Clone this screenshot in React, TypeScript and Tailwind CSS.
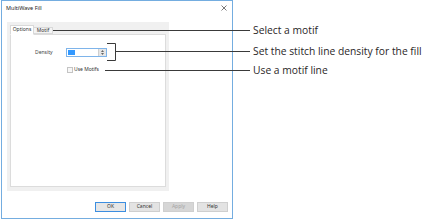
import React from "react";

function Btn({ label, kind }: { label: string; kind?: "default" | "disabled" }) {
  if (kind === "default") {
    return (
      <div className="w-[31px] h-[10px] flex items-center justify-center border border-[#3c8ee0] bg-[#e6e6e6] text-[5px] text-[#333]">
        {label}
      </div>
    );
  }
  if (kind === "disabled") {
    return (
      <div className="w-[31px] h-[10px] flex items-center justify-center border border-[#cfcfcf] bg-[#d6d6d6] text-[5px] text-[#a3a3a3]">
        {label}
      </div>
    );
  }
  return (
    <div className="w-[31px] h-[10px] flex items-center justify-center border border-[#cfcfcf] bg-[#e3e3e3] text-[5px] text-[#333]">
      {label}
    </div>
  );
}

export default function App() {
  return (
    <div className="relative w-[444px] h-[222px] bg-white overflow-hidden" style={{ fontFamily: '"Noto Sans", "Open Sans", sans-serif' }}>
      <div className="flex flex-row">
        {/* Dialog */}
        <div className="ml-px w-[232px] h-[219px] border border-[#74ade0] bg-white flex flex-col">
          <div className="h-[14px] flex items-center justify-between pl-[4px] pr-[5px]">
            <span className="text-[5.5px] text-[#222]">MultiWave Fill</span>
            <svg width="6" height="6" viewBox="0 0 6 6">
              <path d="M0.5 0.5 L5.5 5.5 M5.5 0.5 L0.5 5.5" stroke="#555" strokeWidth="0.8" />
            </svg>
          </div>
          <div className="mt-[7px] ml-[5px] w-[162px] h-[169px] bg-[#f0f0f0] flex flex-col pt-[3px] px-[3px] pb-[4px]">
            <div className="flex flex-row items-end h-[9px]">
              <div className="w-[24px] h-[10px] -mb-px z-10 bg-white border border-[#d9d9d9] border-b-white flex items-center justify-center text-[5px] text-[#333]">
                Options
              </div>
              <div className="w-[19px] h-[7px] bg-[#f4f4f4] border border-l-0 border-[#d9d9d9] flex items-center justify-center text-[5px] text-[#333]">
                Motif
              </div>
            </div>
            <div className="flex-1 bg-white border border-[#dcdcdc] flex flex-col">
              <div className="mt-[13px] flex flex-row items-center pl-[24px]">
                <span className="w-[31px] text-[5px] text-[#444]">Density</span>
                <div className="w-[41px] h-[9px] border border-[#7eb4ea] flex flex-row items-center bg-white">
                  <div className="ml-px w-[7px] h-[5px] bg-[#3399ff]" />
                  <div className="flex-1" />
                  <div className="w-[8px] h-full bg-[#e6e6e6] border-l border-[#cfcfcf] flex flex-col items-center justify-center gap-[1px]">
                    <svg width="3" height="2" viewBox="0 0 3 2"><path d="M0 2 L1.5 0 L3 2 Z" fill="#666" /></svg>
                    <svg width="3" height="2" viewBox="0 0 3 2"><path d="M0 0 L1.5 2 L3 0 Z" fill="#666" /></svg>
                  </div>
                </div>
              </div>
              <div className="mt-[9px] flex flex-row items-center pl-[56px] gap-[1px]">
                <div className="w-[6px] h-[6px] border border-[#c4c4c4] bg-[#f7f7f7]" />
                <span className="text-[5px] text-[#333]">Use Motifs</span>
              </div>
            </div>
          </div>
          <div className="mt-[11px] flex flex-row justify-end gap-[3px] pr-[4px]">
            <Btn label="OK" kind="default" />
            <Btn label="Cancel" />
            <Btn label="Apply" kind="disabled" />
            <Btn label="Help" />
          </div>
        </div>
        {/* Callout labels */}
        <div className="ml-[20px] pt-[24px] flex flex-col text-[10.3px] leading-[12px] text-[#2a2627]" style={{ fontFamily: '"Open Sans", sans-serif' }}>
          <span>Select a motif</span>
          <span className="mt-[9px]">Set the stitch line density for the fill</span>
          <span className="mt-[7px]">Use a motif line</span>
        </div>
      </div>
      {/* Callout lines overlay */}
      <svg className="absolute left-0 top-0 pointer-events-none" width="444" height="222" viewBox="0 0 444 222">
        <g stroke="#3a3a3a" strokeWidth="1" fill="none">
          <path d="M53 30.5 H250" />
          <path d="M107 43.5 H115.5 V60.5 H107" />
          <path d="M115 51.5 H250" />
          <path d="M105 70.5 H250" />
        </g>
      </svg>
    </div>
  );
}
